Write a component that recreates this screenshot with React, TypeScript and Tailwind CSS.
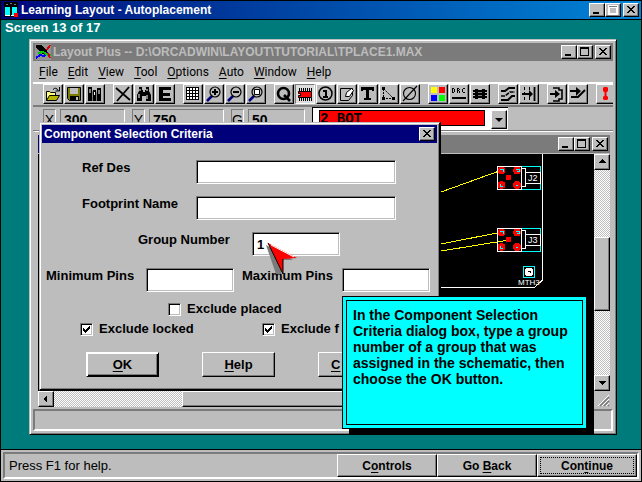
import React from "react";

const raised =
  "border border-t-white border-l-white border-r-black border-b-black bg-[#bdbdbd] shadow-[inset_-1px_-1px_0_#7b7b7b]";
const field =
  "border border-t-[#7b7b7b] border-l-[#7b7b7b] border-r-white border-b-white bg-white px-1 text-black shadow-[inset_1px_1px_0_#000,inset_-1px_-1px_0_#bdbdbd] outline-none";
const dither =
  "bg-[repeating-conic-gradient(#fff_0_25%,#bdbdbd_0_50%)] bg-[length:2px_2px]";

function Hot({ text, at = 0 }: { text: string; at?: number }) {
  return (
    <>
      {text.slice(0, at)}
      <span className="underline underline-offset-2">{text[at]}</span>
      {text.slice(at + 1)}
    </>
  );
}

function WindowButton({ kind, dim = false }: { kind: "Minimize" | "Maximize" | "Close"; dim?: boolean }) {
  return (
    <button type="button" aria-label={kind} className={`h-[14px] w-4 shrink-0 ${raised} ${kind === "Close" ? "ml-0.5" : ""}`}>
      <svg width="14" height="12" shapeRendering="crispEdges" className="block">
        {kind === "Minimize" && <rect x="3" y="8" width="6" height="2" />}
        {kind === "Maximize" && (
          <path
            d="M2 1H11V10H2ZM3 3V9H10V3Z"
            fillRule="evenodd"
            fill={dim ? "#7b7b7b" : "#000"}
            stroke={dim ? "#fff" : "none"}
            strokeWidth={dim ? 1 : 0}
          />
        )}
        {kind === "Close" && (
          <path d="M3 2h2v1h1v1h2v-1h1v-1h2v1h-1v1h-1v1h-1v1h1v1h1v1h1v1h-2v-1h-1v-1h-2v1h-1v1h-2v-1h1v-1h1v-1h1v-1h-1v-1h-1v-1h-1z" />
        )}
      </svg>
    </button>
  );
}

const lens = (inner: React.ReactNode) => (
  <>
    <path d="M3 17L8 12" stroke="#00007b" strokeWidth="2.5" />
    <circle cx="11" cy="8" r="5" fill="#bdbdbd" stroke="#000" strokeWidth="1.2" />
    {inner}
  </>
);

type Tool = { name: string; art: React.ReactNode; on?: boolean };

const groups: Tool[][] = [
  [
    {
      name: "Open",
      art: (
        <>
          <path d="M3.500 16.500v-9h3l1 1h5v3" fill="#ffff7b" stroke="#000" />
          <path d="M3.500 16.500l3-5h10l-3 5z" fill="#b5b500" stroke="#000" />
          <path d="M10 5.500q3-3 5 1M16.500 3v4h-4" fill="none" stroke="#000" />
        </>
      ),
    },
    {
      name: "Save",
      art: (
        <>
          <path d="M3.500 3.500h13v13h-11l-2-2z" fill="#7b7b00" stroke="#000" />
          <path d="M6 4h8v6H6z" fill="#bdbdbd" />
          <path d="M6 12h9v5H6z" />
          <path d="M12 13h2v3h-2z" fill="#bdbdbd" />
        </>
      ),
    },
    {
      name: "Library",
      art: (
        <>
          <path d="M3 3h4v14H3zM8 6h3v11H8zM12 4h4v13h-4z" />
          <path d="M5 5v4M9.500 8v3M14 6v4" stroke="#fff" />
          <path d="M7.500 7v10M11.500 8v9" stroke="#7b7b7b" />
        </>
      ),
    },
  ],
  [
    { name: "Delete", art: <path d="M3 4L17 16M16 3L4 17" stroke="#000" strokeWidth="1.8" /> },
    {
      name: "Find",
      art: (
        <>
          <path d="M5 3h3v3h1v2h2V6h1V3h3v4l2 4v6h-5v-5h-4v5H3v-6l2-4z" />
          <path d="M6 5v2M5 10v4M13 5v2M13 11v4" stroke="#fff" />
        </>
      ),
    },
    { name: "Edit", art: <path d="M4 3h12v3H8v3h7v3H8v2h8v3H4z" /> },
  ],
  [
    {
      name: "Spreadsheet",
      art: (
        <>
          <path d="M3 3h13v13H3z" fill="#fff" />
          <path d="M3.500 3v13M6.500 3v13M9.500 3v13M12.500 3v13M15.500 3v13M3 3.500h13M3 6.500h13M3 9.500h13M3 12.500h13M3 15.500h13" stroke="#000" />
        </>
      ),
    },
    { name: "Zoom in", art: lens(<path d="M8 7h2V5h2v2h2v2h-2v2h-2V9H8z" />) },
    { name: "Zoom out", art: lens(<path d="M8 7h6v2H8z" />) },
    { name: "Zoom all", art: lens(<path d="M8.500 5.500h5v5h-5z" fill="#fff" stroke="#000" />) },
  ],
  [
    {
      name: "Query",
      art: (
        <>
          <circle cx="9.500" cy="9.500" r="5.500" fill="none" stroke="#000" strokeWidth="2.600" />
          <path d="M10 11l6 6" stroke="#000" strokeWidth="2.600" />
        </>
      ),
    },
    {
      name: "Component",
      on: true,
      art: (
        <>
          <path d="M4 5.500h13M4 15.500h13" stroke="#000" strokeWidth="3" strokeDasharray="1 1" />
          <path d="M3.500 7.500h13v6h-13v-2h2v-2h-2z" fill="#f00" stroke="#000" />
        </>
      ),
    },
    {
      name: "Pin",
      art: (
        <>
          <circle cx="9.500" cy="9.500" r="6.500" fill="none" stroke="#000" strokeWidth="1.500" />
          <path d="M7 6h4v6h1v2H7v-2h2V8H7z" />
        </>
      ),
    },
    {
      name: "Obstacle",
      art: (
        <>
          <path d="M3.500 4.500h12v7l-4 5h-8z" fill="none" stroke="#000" />
          <path d="M8.500 12.500l1-4 5-4 2 2-4 6z" fill="#fff" stroke="#000" />
        </>
      ),
    },
    { name: "Text", art: <path d="M3 3h13v4h-2V6h-3v8h2v2H6v-2h2V6H5v1H3z" /> },
    {
      name: "Connection",
      art: (
        <>
          <path d="M4.500 5v9.500h10M5 5l9 9" fill="none" stroke="#000" strokeDasharray="2 1" />
          <path d="M3 3h3v3H3zM3 13h3v3H3zM13 13h3v3h-3z" />
        </>
      ),
    },
    {
      name: "Error",
      art: (
        <g fill="none" stroke="#000" strokeWidth="1.100">
          <circle cx="9.500" cy="9.500" r="6" />
          <path d="M3 17L17 2" />
        </g>
      ),
    },
  ],
  [
    {
      name: "Colors",
      art: (
        <>
          <path d="M3 3h6v6H3z" fill="#ff0" />
          <path d="M11 3h6v6h-6z" fill="#f00" />
          <path d="M3 11h6v6H3z" fill="#00f" />
          <path d="M11 11h6v6h-6z" fill="#0f0" />
        </>
      ),
    },
    {
      name: "Design rule check",
      art: (
        <>
          <path
            d="M3.500 4v5M3 4.500h2M5.500 5v3M3 8.500h2M8.500 4v5M8 4.500h2M10.500 5v1M8 6.500h2M10.500 7v2M16 4.500h-2M13.500 5v3M16 8.500h-2"
            stroke="#000"
            fill="none"
          />
          <path d="M3 13h14v2H3z" />
        </>
      ),
    },
    {
      name: "Reconnect",
      art: (
        <>
          <path d="M3 6h14v2H3zM3 9h14v2H3zM3 12h14v2H3zM5 5h3v10H5zM12 5h3v10h-3z" />
          <path d="M8 8.500h4M8 11.500h4" stroke="#7b7b7b" />
        </>
      ),
    },
  ],
  [
    {
      name: "Shove track",
      art: (
        <g fill="none" stroke="#000">
          <path d="M3 7h4l4-3h6M3 16h7l4-4h3" strokeWidth="2" />
          <path d="M3 12h4l5-4h5" strokeWidth="1.600" strokeDasharray="4 1" />
        </g>
      ),
    },
    {
      name: "Edit segment",
      art: (
        <>
          <path d="M5.500 3v14M10.500 3v14" stroke="#000" strokeDasharray="3 2" />
          <path d="M3 10h9M15.500 3v14" stroke="#000" strokeWidth="1.800" />
          <path d="M10 6l4 4-4 4z" />
        </>
      ),
    },
  ],
  [
    {
      name: "Add route",
      art: (
        <>
          <path d="M6 4h6v2h3v9h-3v2H6" fill="none" stroke="#000" strokeWidth="1.600" />
          <path d="M3 10h6" stroke="#000" strokeWidth="2" />
          <path d="M8 6l5 4-5 4z" />
        </>
      ),
    },
    {
      name: "Auto path",
      art: (
        <>
          <path d="M2 7h7M3 13h7l7-7" fill="none" stroke="#000" strokeWidth="2" />
          <path d="M8 3l5 4-5 5z" />
        </>
      ),
    },
  ],
  [
    {
      name: "Online check",
      art: (
        <>
          <path d="M9.500 5v9" stroke="#f00" strokeWidth="2" />
          <path d="M8 3h3l1 1v3l-1 1H8L7 7V4zM8 12h3l1 1v2l-1 1H8l-1-1v-2z" fill="#f00" />
        </>
      ),
    },
  ],
];

function Connector({ y, name }: { y: number; name: string }) {
  return (
    <g transform={`translate(459 ${y})`}>
      <rect x="0.5" y="0.5" width="24" height="23" fill="none" stroke="#fff" />
      <path d="M25 0.500h18.500v23H25" fill="none" stroke="#0ff" />
      <path d="M25 2.500h3.500v18H25M28 6.500h15M28 17.500h15M43.500 6v12" fill="none" stroke="#fff" />
      <g fill="#f00">
        <circle cx="4.500" cy="4.500" r="3.800" />
        <circle cx="20" cy="4.500" r="3.800" />
        <circle cx="4.500" cy="19" r="3.800" />
        <circle cx="20" cy="19" r="3.800" />
        <circle cx="11.500" cy="11.500" r="2.800" />
      </g>
      <path d="M3 3.500h3v2M19 3.500h3v2h-2M3.500 18v2h2M19 19.500h2" fill="none" stroke="#0ff" />
      <text x="31" y="15" fill="#fff" fontSize="9" className="[font-family:'Liberation_Sans',sans-serif]">
        {name}
      </text>
    </g>
  );
}

function Board() {
  return (
    <svg className="block h-full w-full" shapeRendering="crispEdges" role="img" aria-label="Board layout">
      <path d="M403 38L464 16M403 90L464 78M403 97L471 86" stroke="#ff0" fill="none" />
      <path d="M504.500 0v126l-8 7.500H400" stroke="#fff" fill="none" />
      <Connector y={12} name="J2" />
      <Connector y={74} name="J3" />
      <rect x="485.5" y="112.500" width="11" height="11" fill="none" stroke="#0ff" />
      <circle cx="491" cy="118" r="4.500" fill="#fff" />
      <path d="M490 117h2v2" stroke="#000" fill="none" />
      <text x="480" y="131" fill="#fff" fontSize="8" className="[font-family:'Liberation_Sans',sans-serif]">
        MTH3
      </text>
    </svg>
  );
}

function Arrow({ dir }: { dir: "up" | "down" | "left" }) {
  const d = { up: "M7 4L11 8H3z", down: "M3 5H11L7 9z", left: "M4 7L8 3V11z" }[dir];
  return (
    <button type="button" aria-label={`Scroll ${dir}`} className={`size-4 shrink-0 ${raised}`}>
      <svg width="14" height="14" shapeRendering="crispEdges" className="block">
        <path d={d} />
      </svg>
    </button>
  );
}

function Readout({ label, value, width }: { label: string; value: string; width: string }) {
  const box = "h-5 border border-t-[#7b7b7b] border-l-[#7b7b7b] border-r-white border-b-white";
  return (
    <div className="flex shrink-0 gap-1 text-[14px] leading-5 text-black">
      <span className={`w-[13px] text-center ${box}`}>{label}</span>
      <span className={`pl-[3px] font-bold ${box} ${width}`}>{value}</span>
    </div>
  );
}

function Check({ label, checked = false }: { label: string; checked?: boolean }) {
  return (
    <label className="flex items-center gap-1.5 leading-4">
      <span className="grid shrink-0">
        <input
          type="checkbox"
          defaultChecked={checked}
          className="peer col-start-1 row-start-1 size-[13px] appearance-none border border-t-[#7b7b7b] border-l-[#7b7b7b] border-r-white border-b-white bg-white shadow-[inset_1px_1px_0_#000,inset_-1px_-1px_0_#bdbdbd]"
        />
        <svg
          width="13"
          height="13"
          shapeRendering="crispEdges"
          className="pointer-events-none invisible col-start-1 row-start-1 peer-checked:visible"
        >
          <path d="M3 5h1v1h1v1h1V6h1V5h1V4h1V3h1v3H9v1H8v1H7v1H6v1H5V9H4V8H3z" />
        </svg>
      </span>
      {label}
    </label>
  );
}

function DialogButton({ text, primary = false, name }: { text: string; primary?: boolean; name?: string }) {
  return (
    <button
      type="button"
      aria-label={name}
      className={`h-[25px] w-[73px] text-[13px] font-bold ${raised} ${
        primary ? "border-black shadow-[inset_1px_1px_0_#fff,inset_-1px_-1px_0_#000,inset_-2px_-2px_0_#7b7b7b]" : ""
      } ${name ? "pl-3 text-left" : ""}`}
    >
      <Hot text={text} />
    </button>
  );
}

function SelectionDialog() {
  return (
    <section
      role="dialog"
      aria-label="Component Selection Criteria"
      className="absolute top-[82px] left-[9px] h-[269px] w-[402px] border-t border-l border-r-2 border-b-2 border-[#bdbdbd] border-r-black border-b-black bg-[#bdbdbd] p-0.5 text-[13px] font-bold text-black shadow-[inset_1px_1px_0_#fff,inset_-1px_-1px_0_#7b7b7b]"
    >
      <header className="flex h-[18px] items-center bg-[#00007b] pr-0.5 pl-0.5 text-white">
        <h2 className="flex-1 text-[12px]">Component Selection Criteria</h2>
        <WindowButton kind="Close" />
      </header>
      <form className="pt-[17px] leading-4">
        <div className="flex flex-col gap-3">
          <div className="flex pl-10">
            <label htmlFor="ref" className="w-[114px]">Ref Des</label>
            <input id="ref" className={`h-6 w-[200px] ${field}`} />
          </div>
          <div className="flex pl-10">
            <label htmlFor="foot" className="w-[114px]">Footprint Name</label>
            <input id="foot" className={`h-6 w-[200px] ${field}`} />
          </div>
          <div className="flex pl-24">
            <label htmlFor="group" className="w-[114px]">Group Number</label>
            <input id="group" defaultValue="1" className={`h-6 w-[88px] ${field}`} />
          </div>
          <div className="flex pl-1">
            <label htmlFor="min" className="w-[100px]">Minimum Pins</label>
            <input id="min" className={`h-6 w-[88px] ${field}`} />
            <label htmlFor="max" className="ml-2 w-[100px]">Maximum Pins</label>
            <input id="max" className={`h-6 w-[88px] ${field}`} />
          </div>
        </div>
        <div className="mt-[9px] flex flex-col gap-1">
          <div className="pl-[126px]">
            <Check label="Exclude placed" />
          </div>
          <div className="grid grid-cols-[182px_1fr] pl-[38px]">
            <Check label="Exclude locked" checked />
            <Check label="Exclude f" checked />
          </div>
        </div>
        <div className="mt-[15px] flex gap-[43px] pl-11">
          <DialogButton text="OK" primary />
          <DialogButton text="Help" />
          <DialogButton text="C" name="Cancel" />
        </div>
      </form>
    </section>
  );
}

function LayoutWindow() {
  return (
    <section className="relative mr-6 mb-[14px] ml-7 flex flex-1 flex-col border border-[#bdbdbd] border-r-black border-b-black bg-[#bdbdbd] p-[3px] shadow-[inset_1px_1px_0_#fff,inset_-1px_-1px_0_#7b7b7b]">
      <header className="flex h-[18px] shrink-0 items-center bg-[#7b7b7b] pr-0.5 pl-0.5 text-[#bdbdbd]">
        <svg width="16" height="16" className="mr-0.5 shrink-0" shapeRendering="crispEdges">
          <path d="M0 0h16v16H0z" fill="#949494" />
          <path d="M1 1h5l6 6v3H8L1 4z" />
          <path d="M1 14l4-3 4 1 4-3" stroke="#00f" strokeWidth="2" fill="none" />
          <path d="M3 9l5-1 5 3h3" stroke="#0c0" strokeWidth="2" fill="none" />
          <path d="M12 6l3-5M13 9l2 5" stroke="#d00" strokeWidth="2" />
        </svg>
        <h1 className="flex-1 truncate text-[12px] font-bold">
          Layout Plus -- D:\ORCADWIN\LAYOUT\TUTORIAL\TPLACE1.MAX
        </h1>
        <WindowButton kind="Minimize" />
        <WindowButton kind="Maximize" />
        <WindowButton kind="Close" />
      </header>
      <nav className="flex h-[21px] shrink-0 items-center gap-2.5 pl-1.5 text-[12px] text-black [font-family:Roboto,'Liberation_Sans',sans-serif]">
        {["File", "Edit", "View", "Tool", "Options", "Auto", "Window", "Help"].map((m) => (
          <button key={m} type="button">
            <Hot text={m} />
          </button>
        ))}
      </nav>
      <div className="flex shrink-0 gap-2 overflow-hidden border-t-2 border-b-2 border-t-white border-b-[#7b7b7b] pb-px pl-2.5">
        {groups.map((g, i) => (
          <div key={i} className="flex shrink-0 gap-px">
            {g.map((t) => (
              <button
                key={t.name}
                type="button"
                aria-label={t.name}
                className={`size-5 shrink-0 ${
                  t.on ? "border border-t-[#7b7b7b] border-l-[#7b7b7b] border-r-white border-b-white bg-[#dedede]" : raised
                }`}
              >
                <svg width="18" height="18" viewBox="1 1 18 18" className="block">
                  {t.art}
                </svg>
              </button>
            ))}
          </div>
        ))}
      </div>
      <div className="flex h-6 shrink-0 items-start gap-[7px] border-b border-b-[#7b7b7b] pl-2.5">
        <div className="flex gap-[7px] pt-0.5">
          <Readout label="X" value="300" width="w-[65px]" />
          <Readout label="Y" value="750" width="w-[75px]" />
          <Readout label="G" value="50" width="w-[57px]" />
        </div>
        <div className="flex h-[23px] w-[196px] shrink-0 border-t border-l border-black bg-white py-0.5 pr-px pl-1.5">
          <select
            aria-label="Layer"
            className="mr-1.5 h-4 min-w-0 flex-1 appearance-none border border-black bg-[#f00] text-[14px] leading-4 font-bold text-black [font-family:'Liberation_Mono',monospace]"
          >
            <option>2 BOT</option>
          </select>
          <span className={`flex h-[19px] w-4 items-center justify-center ${raised}`}>
            <svg width="8" height="4">
              <path d="M0 0h8L4 4z" />
            </svg>
          </span>
        </div>
      </div>
      <div className="flex min-h-0 flex-1 flex-col border-t border-l-2 border-white border-l-[#bdbdbd] pt-[3px] pr-[3px] pl-[3px]">
        <div className="flex h-[18px] shrink-0 items-center justify-end border-l border-[#00007b] bg-[#7b7b7b] pr-0.5">
          <WindowButton kind="Minimize" />
          <WindowButton kind="Maximize" />
          <WindowButton kind="Close" />
        </div>
        <div className="grid min-h-0 flex-1 grid-cols-[1fr_16px] grid-rows-[1fr_16px] border-t border-[#bdbdbd]">
          <div className="min-h-0 overflow-hidden bg-black">
            <Board />
          </div>
          <div className={`flex min-h-0 flex-col ${dither}`}>
            <Arrow dir="up" />
            <div className="h-[67px]" />
            <div className={`h-[74px] ${raised}`} />
            <div className="flex-1" />
            <Arrow dir="down" />
          </div>
          <div className={`flex min-w-0 ${dither}`}>
            <Arrow dir="left" />
            <div className="w-[128px]" />
            <div className={`flex-1 ${raised}`} />
          </div>
          <svg width="16" height="16" className="block bg-[#bdbdbd]">
            <path d="M4 15L15 4M8 15L15 8M12 15l3-3" stroke="#fff" />
            <path d="M6 15l9-9M10 15l5-5M14 15l1-1" stroke="#7b7b7b" strokeWidth="1.500" />
          </svg>
        </div>
      </div>
      <footer className="mt-0.5 h-[22px] shrink-0 border-2 border-t-[#7b7b7b] border-l-[#7b7b7b] border-r-white border-b-white" />

      <SelectionDialog />

      <aside className="absolute top-[256px] left-[312px] h-[133px] w-[245px] border border-black bg-[#0ff] p-[3px] shadow-[7px_6px_0_#000]">
        <p className="h-full border border-black pt-1.5 pl-1.5 text-[14px] leading-4 font-bold text-black">
          In the Component Selection
          <br />
          Criteria dialog box, type a group
          <br />
          number of a group that was
          <br />
          assigned in the schematic, then
          <br />
          choose the OK button.
        </p>
      </aside>

      <svg width="36" height="36" className="pointer-events-none absolute top-[202px] left-[234px]">
        <path d="M2 3L12 32l5 0 0-14 12 0z" fill="#7b7b7b" />
        <path d="M4 1L33 16L19 17V32z" fill="#f00" />
        <path d="M4 1L19 32V17" fill="none" stroke="#000" />
        <path d="M7 3L30 15" stroke="#fff" />
      </svg>
    </section>
  );
}

function BarButton({ text, at, focused = false }: { text: string; at: number; focused?: boolean }) {
  return (
    <button
      type="button"
      className={`h-[23px] w-[100px] shrink-0 p-0.5 text-[12px] font-bold text-black ${raised} ${
        focused ? "border-black" : ""
      }`}
    >
      <span
        className={`flex h-full items-center justify-center border ${
          focused ? "border-dotted border-black" : "border-transparent"
        }`}
      >
        <span>
          <Hot text={text} at={at} />
        </span>
      </span>
    </button>
  );
}

export default function App() {
  return (
    <div className="flex h-screen min-h-[482px] flex-col border border-black bg-[#007b7b] [font-family:'Liberation_Sans',Arial,sans-serif]">
      <header className="flex h-[19px] shrink-0 items-center border-b border-black bg-linear-to-r from-[#00007b] to-[#0084d6] pr-0.5 pl-0.5 text-white">
        <svg width="16" height="16" className="mr-0.5 shrink-0" shapeRendering="crispEdges">
          <path d="M1 0h14v5H1z" />
          <path d="M3 2h2M7 1h2M11 2h2" stroke="#7b7b7b" />
          <path d="M1 4h6v10H1zM8 4h6v10H8z" fill="#0ff" stroke="#000" />
          <path d="M2 13h5M8 13h5" stroke="#fff" />
          <path d="M11 11h4v4h-4z" fill="#f00" />
        </svg>
        <h1 className="flex-1 text-[12px] font-bold">Learning Layout - Autoplacement</h1>
        <WindowButton kind="Minimize" />
        <WindowButton kind="Maximize" dim />
        <WindowButton kind="Close" />
      </header>
      <p className="h-[19px] shrink-0 pl-1 text-[13px] leading-[15px] font-bold text-white">Screen 13 of 17</p>
      <LayoutWindow />
      <footer className="flex h-8 shrink-0 border-t border-black bg-[#bdbdbd] px-0.5 pt-0.5 pb-0.5">
        <div className="flex flex-1 items-center border-2 border-t-[#7b7b7b] border-l-[#7b7b7b] border-r-white border-b-white">
          <span className="flex-1 pl-1 text-[13px] text-black">Press F1 for help.</span>
          <BarButton text="Controls" at={1} />
          <BarButton text="Go Back" at={3} />
          <BarButton text="Continue" at={3} focused />
        </div>
      </footer>
    </div>
  );
}
